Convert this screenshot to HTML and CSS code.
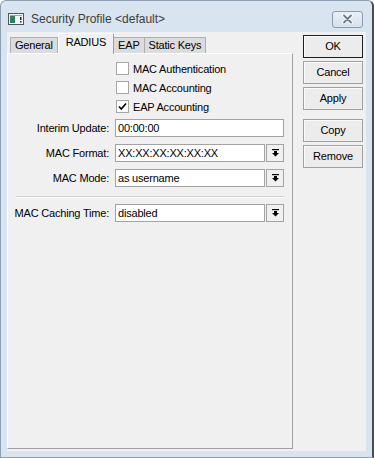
FILE: index.html
```html
<!DOCTYPE html>
<html lang="en">
<head>
<meta charset="UTF-8">
<title>Security Profile &lt;default&gt;</title>
<link rel="stylesheet" href="styles.css">
</head>
<body>
<div class="window">
<div class="titlebar">
<svg class="app-icon" width="16" height="12" viewBox="0 0 16 12">
<rect x="0.5" y="0.5" width="15" height="11" fill="#f4f4f4" stroke="#555"/>
<rect x="2" y="3" width="5" height="7" fill="#2f7d5c"/>
<rect x="2" y="2" width="12" height="1" fill="#9aa4ad"/>
<rect x="12" y="4" width="1.5" height="3" fill="#222"/>
<rect x="12" y="8" width="1.5" height="1.5" fill="#222"/>
</svg>
<span class="title">Security Profile &lt;default&gt;</span>
<div class="close">
<svg width="13" height="10" viewBox="0 0 13 10">
<path d="M3 1.5 L10 8.5 M10 1.5 L3 8.5" stroke="#fff" stroke-width="3.6" stroke-linecap="round"/>
<path d="M3 1.5 L10 8.5 M10 1.5 L3 8.5" stroke="#6a7786" stroke-width="1.8" stroke-linecap="round"/>
</svg>
</div>
</div>

<div class="client">
<div class="tabbox">
<div class="tabs">
<div class="tab">General</div>
<div class="tab active">RADIUS</div>
<div class="tab">EAP</div>
<div class="tab">Static Keys</div>
</div>
<div class="panel">
<div class="checks">
<div class="check"><span class="box"></span>MAC Authentication</div>
<div class="check"><span class="box"></span>MAC Accounting</div>
<div class="check"><span class="box checked"><svg width="11" height="11" viewBox="0 0 11 11"><path d="M2 5.5 L4.3 8 L9 2.5" fill="none" stroke="#000" stroke-width="1.6"/></svg></span>EAP Accounting</div>
</div>

<div class="field">
<span class="label">Interim Update:</span>
<div class="input wide">00:00:00</div>
</div>
<div class="field">
<span class="label">MAC Format:</span>
<div class="input">XX:XX:XX:XX:XX:XX</div>
<span class="drop"><svg width="7" height="8" viewBox="0 0 7 8"><rect x="0" y="0" width="7" height="1.2"/><rect x="2" y="2" width="3" height="2"/><polygon points="0,4 7,4 3.5,7.5"/></svg></span>
</div>
<div class="field">
<span class="label">MAC Mode:</span>
<div class="input">as username</div>
<span class="drop"><svg width="7" height="8" viewBox="0 0 7 8"><rect x="0" y="0" width="7" height="1.2"/><rect x="2" y="2" width="3" height="2"/><polygon points="0,4 7,4 3.5,7.5"/></svg></span>
</div>

<div class="sep"></div>

<div class="field first">
<span class="label">MAC Caching Time:</span>
<div class="input">disabled</div>
<span class="drop"><svg width="7" height="8" viewBox="0 0 7 8"><rect x="0" y="0" width="7" height="1.2"/><rect x="2" y="2" width="3" height="2"/><polygon points="0,4 7,4 3.5,7.5"/></svg></span>
</div>
</div>
</div>

<div class="actions">
<div class="btn default">OK</div>
<div class="btn">Cancel</div>
<div class="btn">Apply</div>
<div class="btn gap">Copy</div>
<div class="btn">Remove</div>
</div>
</div>
</div>
</body>
</html>
```

FILE: styles.css
```css
body {
margin: 0;
background: #fff;
font-family: "Liberation Sans", Arial, sans-serif;
font-size: 11px;
letter-spacing: -0.2px;
color: #000;
}
.window {
width: 374px;
height: 458px;
box-sizing: border-box;
background: #d9e4f1;
border: 1px solid #8f9fb2;
border-right: 2px solid #4b4b4b;
border-radius: 6px 6px 0 0;
padding: 0 6px 6px 6px;
display: flex;
flex-direction: column;
}
.titlebar {
height: 31px;
box-sizing: border-box;
padding-top: 5px;
display: flex;
align-items: center;
flex: none;
}
.app-icon {
margin-left: 1px;
}
.title {
flex: 1;
margin-left: 7px;
font-size: 12px;
letter-spacing: 0;
color: #3c3c3c;
}
.close {
width: 31px;
height: 17px;
box-sizing: border-box;
margin-right: 3px;
border: 1px solid #8c9bb0;
border-radius: 3px;
background: linear-gradient(#e9eff7, #d6e0ec);
display: flex;
align-items: center;
justify-content: center;
}
.client {
flex: 1;
background: #f0f0f0;
display: flex;
}
.tabbox {
width: 286px;
display: flex;
flex-direction: column;
padding-bottom: 2px;
box-sizing: border-box;
}
.tabs {
height: 21px;
flex: none;
display: flex;
align-items: flex-start;
padding-left: 3px;
position: relative;
z-index: 1;
}
.tab {
margin-top: 5px;
height: 16px;
line-height: 15px;
box-sizing: border-box;
padding: 0 4px;
background: #dcdcdc;
border: 1px solid #adadad;
border-bottom: none;
}
.tab + .tab {
border-left: none;
}
.tab.active {
margin-top: 1px;
height: 21px;
padding: 1px 7px 0 7px;
background: #f0f0f0;
border-color: #fff #a0a0a0 #fff #fff;
border-left: 1px solid #fff;
}
.panel {
flex: 1;
border: 1px solid;
border-color: #fff #a0a0a0 #a0a0a0 #fff;
}
.checks {
padding: 5px 0 0 108px;
}
.check {
height: 19px;
display: flex;
align-items: center;
}
.box {
width: 13px;
height: 13px;
box-sizing: border-box;
border: 1px solid #a6a6a6;
background: #fff;
margin-right: 4px;
display: flex;
align-items: center;
justify-content: center;
}
.field {
display: flex;
align-items: center;
height: 18px;
margin-top: 7px;
}
.checks + .field {
margin-top: 3px;
}
.field.first {
margin-top: 6px;
}
.label {
width: 101px;
margin-right: 6px;
text-align: right;
}
.input {
width: 150px;
height: 18px;
box-sizing: border-box;
border: 1px solid #a3a3a3;
background: #fff;
padding-left: 2px;
line-height: 16px;
}
.input.wide {
width: 169px;
}
.drop {
width: 18px;
height: 18px;
box-sizing: border-box;
margin-left: 1px;
border: 1px solid #a3a3a3;
background: #f0f0f0;
display: flex;
align-items: center;
justify-content: center;
}
.sep {
margin: 9px 8px 0 8px;
border-top: 1px solid #d0d0d0;
border-bottom: 1px solid #fff;
}
.actions {
margin: 3px 0 0 10px;
width: 60px;
display: flex;
flex-direction: column;
gap: 3px;
}
.btn {
height: 23px;
box-sizing: border-box;
border: 1px solid #a0a0a0;
box-shadow: inset 1px 1px 0 #fbfbfb;
background: #ececec;
text-align: center;
line-height: 21px;
}
.btn.default {
border-color: #1f1f1f;
}
.btn.gap {
margin-top: 6px;
}
```
